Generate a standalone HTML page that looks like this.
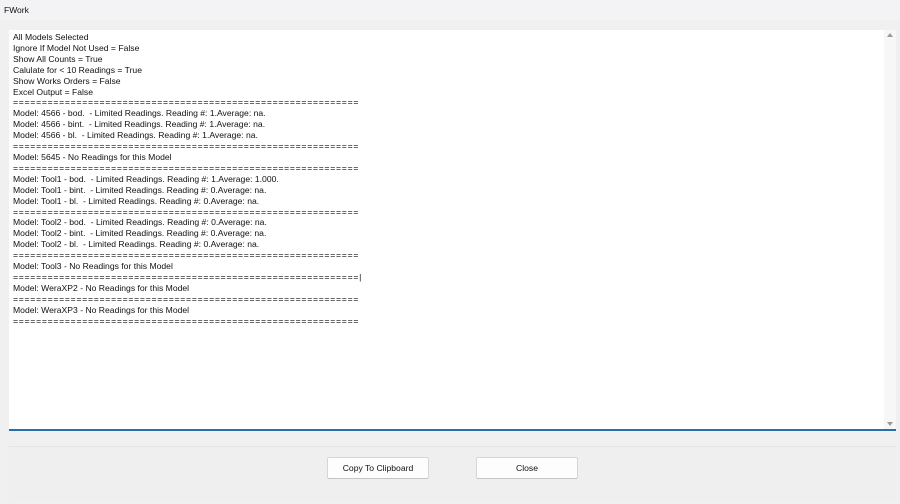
<!DOCTYPE html>
<html><head><meta charset="utf-8"><style>
html,body{margin:0;padding:0;width:900px;height:504px;overflow:hidden;background:#f0f0f0;font-family:"Liberation Sans",sans-serif}
.title{position:absolute;left:0;top:0;width:900px;height:20px;background:#f3f3f5;font-size:8.5px;color:#111}
.title span{position:absolute;left:4px;top:5px}
.ta{position:absolute;left:9px;top:30px;width:887px;height:399px;background:#fff;border-bottom:2px solid #2a6ea8}
.txt{position:absolute;left:4px;top:2px;font-size:8.6px;line-height:10.9px;color:#111;white-space:pre}
.eq{letter-spacing:0.75px}
.sb{position:absolute;right:0;top:0;width:12px;height:399px;background:#f7f7f7}
.sb .u{position:absolute;left:3px;top:3px;width:0;height:0;border-left:3px solid transparent;border-right:3px solid transparent;border-bottom:4px solid #999}
.sb .d{position:absolute;left:3px;bottom:3px;width:0;height:0;border-left:3px solid transparent;border-right:3px solid transparent;border-top:4px solid #999}
.panel{position:absolute;left:9px;top:446px;width:887px;height:54px;background:#efefef;border-top:1px solid #e4e4e4}
.btn{position:absolute;top:457px;height:20px;width:100px;background:#fdfdfd;border:1px solid #d6d6d6;border-bottom-color:#c4c4c4;border-radius:2px;font-size:8.6px;color:#111;text-align:center;line-height:20px}
</style></head><body>
<div class="title"><span>FWork</span></div>
<div class="ta"><div class="txt">All Models Selected
Ignore If Model Not Used = False
Show All Counts = True
Calulate for &lt; 10 Readings = True
Show Works Orders = False
Excel Output = False
<span class="eq">============================================================</span>
Model: 4566 - bod.  - Limited Readings. Reading #: 1.Average: na.
Model: 4566 - bint.  - Limited Readings. Reading #: 1.Average: na.
Model: 4566 - bl.  - Limited Readings. Reading #: 1.Average: na.
<span class="eq">============================================================</span>
Model: 5645 - No Readings for this Model
<span class="eq">============================================================</span>
Model: Tool1 - bod.  - Limited Readings. Reading #: 1.Average: 1.000.
Model: Tool1 - bint.  - Limited Readings. Reading #: 0.Average: na.
Model: Tool1 - bl.  - Limited Readings. Reading #: 0.Average: na.
<span class="eq">============================================================</span>
Model: Tool2 - bod.  - Limited Readings. Reading #: 0.Average: na.
Model: Tool2 - bint.  - Limited Readings. Reading #: 0.Average: na.
Model: Tool2 - bl.  - Limited Readings. Reading #: 0.Average: na.
<span class="eq">============================================================</span>
Model: Tool3 - No Readings for this Model
<span class="eq">============================================================</span>|
Model: WeraXP2 - No Readings for this Model
<span class="eq">============================================================</span>
Model: WeraXP3 - No Readings for this Model
<span class="eq">============================================================</span></div>
<div class="sb"><div class="u"></div><div class="d"></div></div></div>
<div class="panel"></div>
<div class="btn" style="left:327px">Copy To Clipboard</div>
<div class="btn" style="left:476px">Close</div>
</body></html>
